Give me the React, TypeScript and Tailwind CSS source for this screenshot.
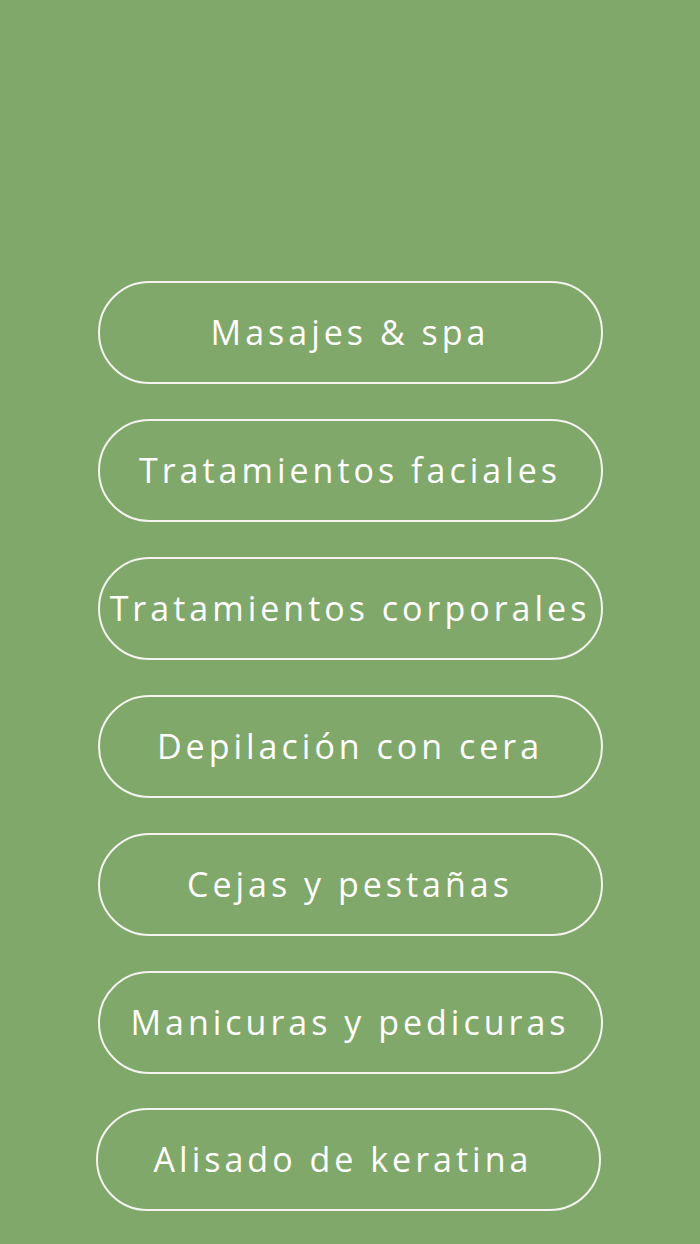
import React from "react";

const items = [
  "Masajes & spa",
  "Tratamientos faciales",
  "Tratamientos corporales",
  "Depilación con cera",
  "Cejas y pestañas",
  "Manicuras y pedicuras",
];

export default function App() {
  return (
    <div
      className="min-h-[1244px] w-full bg-[#80a86a] flex flex-col items-center pt-[281px] gap-[35px]"
      style={{ fontFamily: '"Open Sans", "Liberation Sans", sans-serif' }}
    >
      {items.map((label) => (
        <button
          key={label}
          className="w-[505px] h-[103px] rounded-full border-2 border-[#f4f4f0] text-white text-[34px] tracking-[4px] flex items-center justify-center whitespace-nowrap"
        >
          {label}
        </button>
      ))}
      <button className="w-[505px] h-[103px] mr-[4px] -mt-[1px] rounded-full border-2 border-[#f4f4f0] text-white text-[34px] tracking-[4px] flex items-center justify-center pr-[10px] whitespace-nowrap">
        Alisado de keratina
      </button>
    </div>
  );
}
